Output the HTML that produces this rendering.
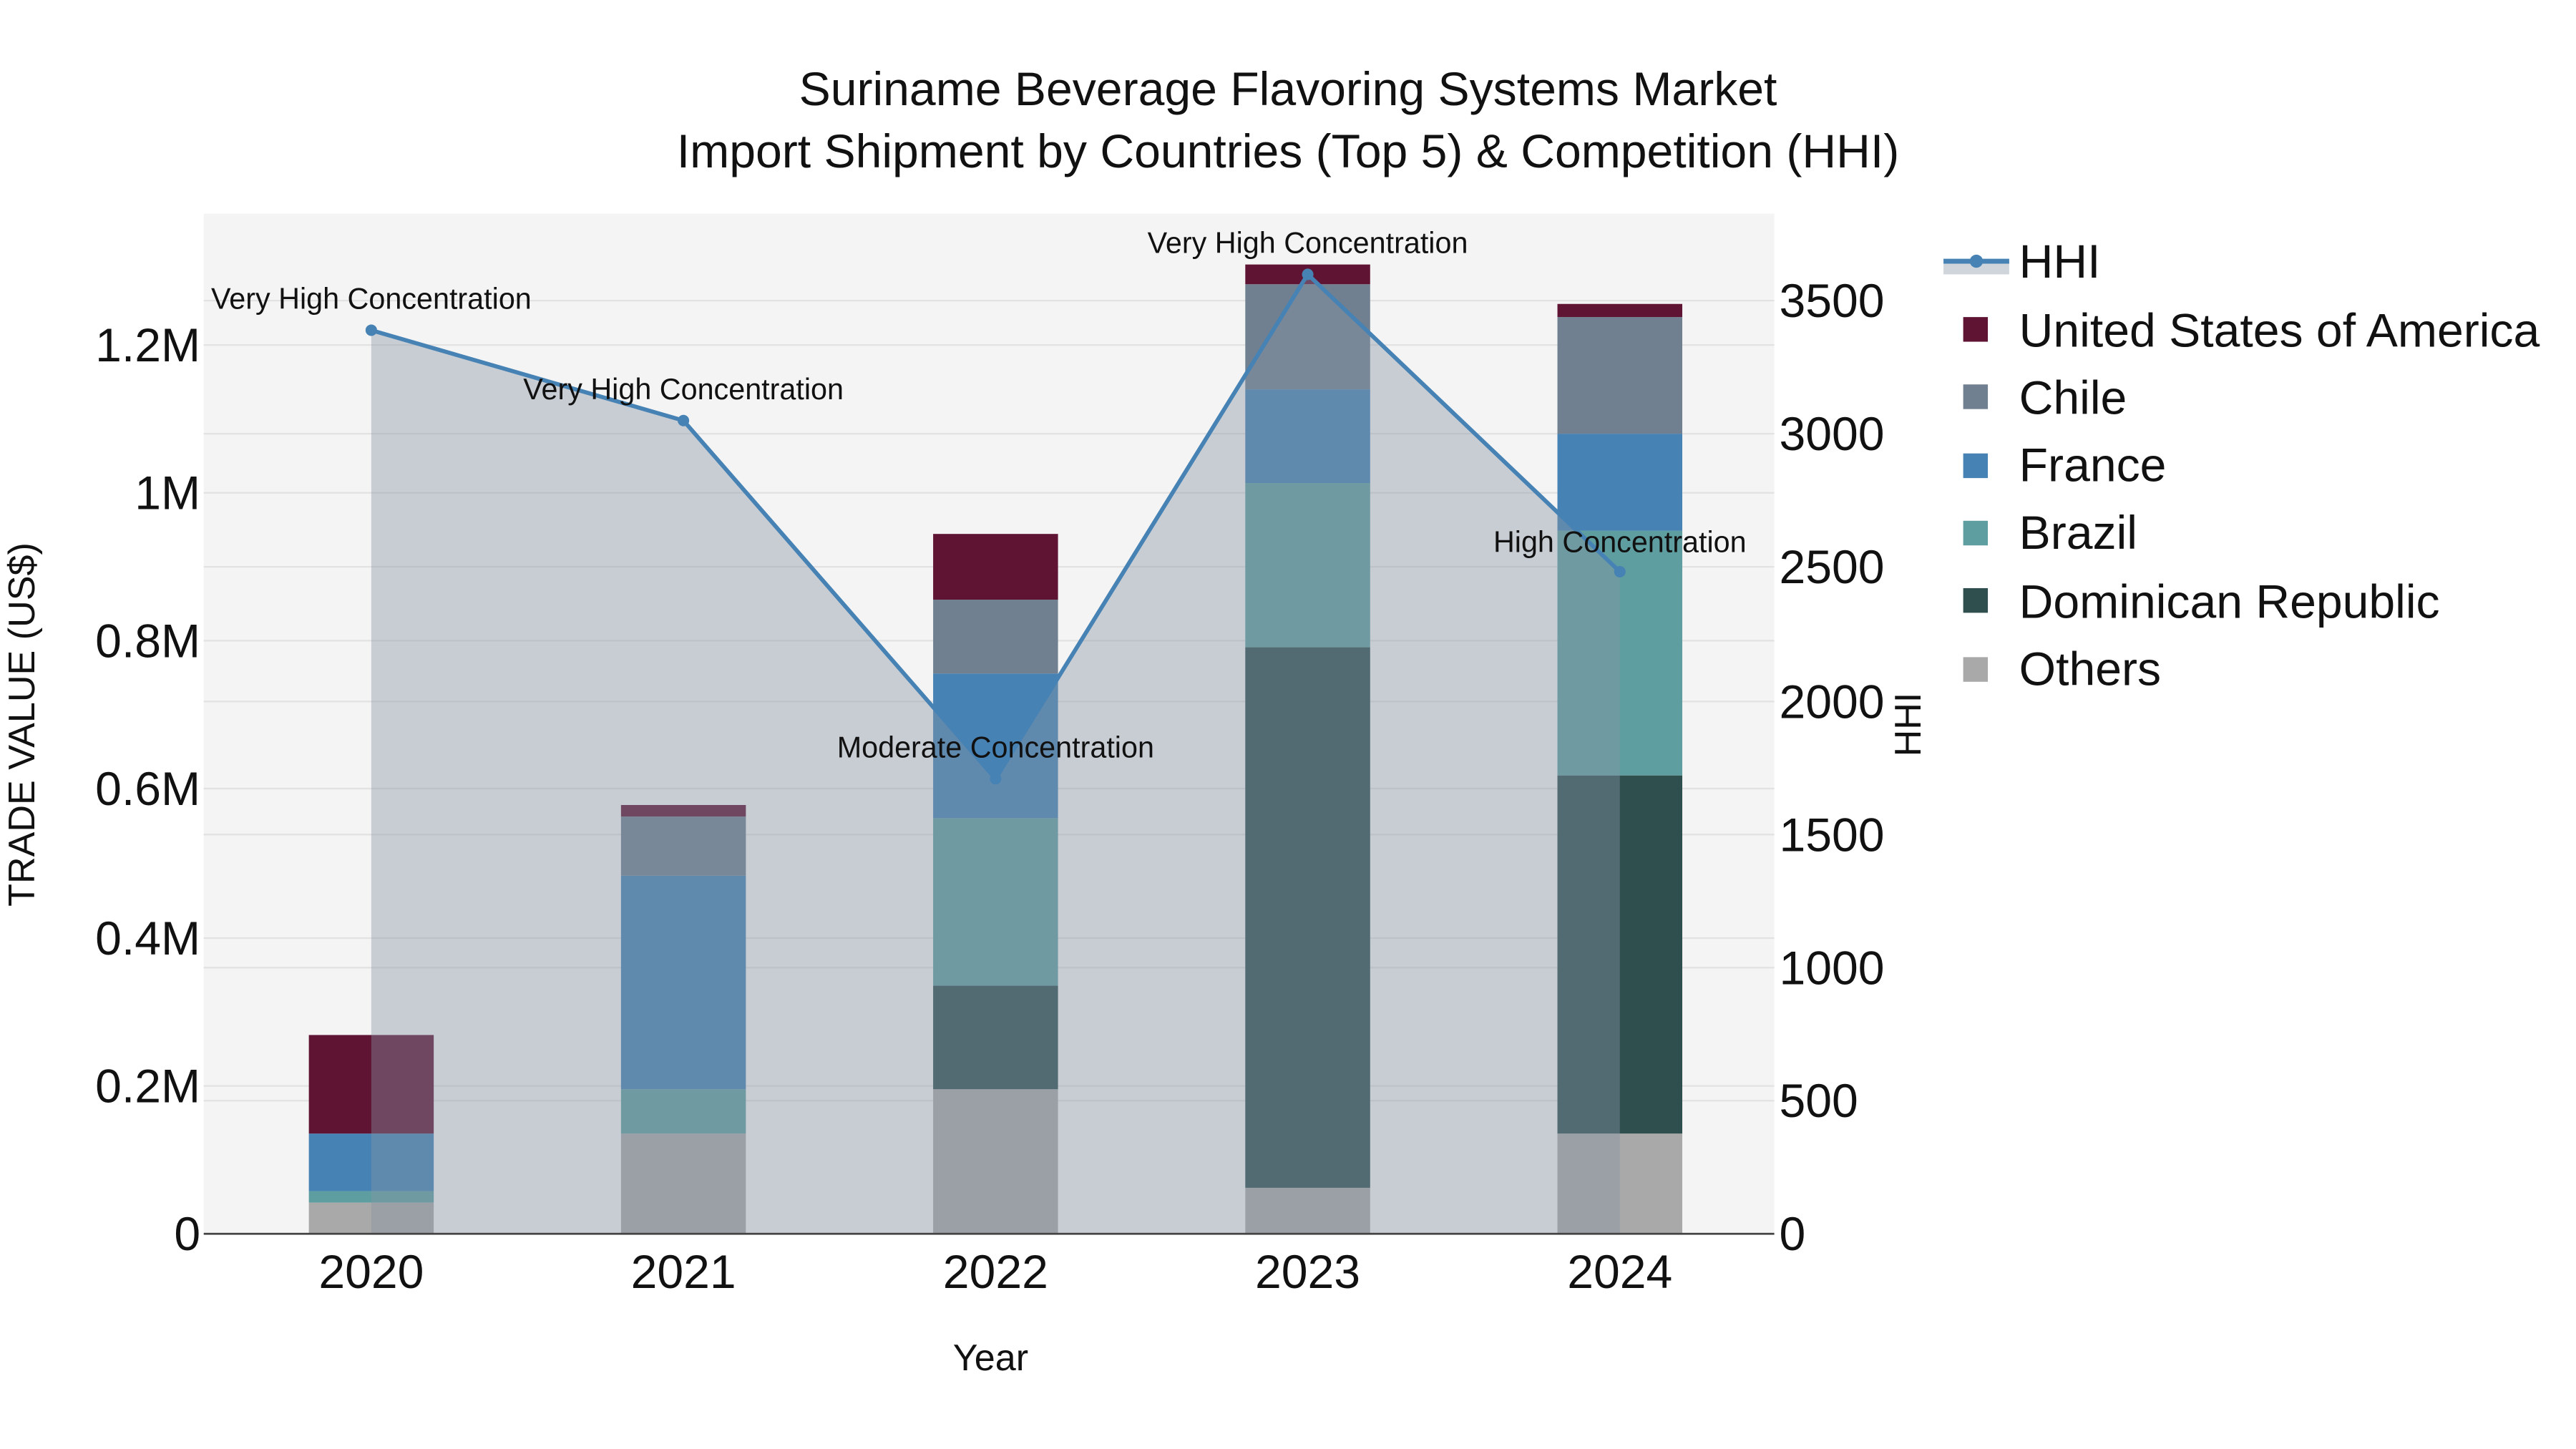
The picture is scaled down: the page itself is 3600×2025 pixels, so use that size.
<!DOCTYPE html>
<html><head><meta charset="utf-8"><style>html,body{margin:0;padding:0;background:#fff}svg{display:block}</style></head>
<body>
<svg width="3600" height="2025" viewBox="0 0 1568 882" xmlns="http://www.w3.org/2000/svg" font-family="Liberation Sans, Arial, sans-serif">
<rect x="0" y="0" width="1568" height="882" fill="#fff"/>
<rect x="124" y="130" width="956" height="621" fill="#f4f4f4"/>
<g stroke="#e2e2e2" stroke-width="1">
<line x1="124" x2="1080" y1="661" y2="661"/><line x1="124" x2="1080" y1="571" y2="571"/><line x1="124" x2="1080" y1="480" y2="480"/><line x1="124" x2="1080" y1="390" y2="390"/><line x1="124" x2="1080" y1="300" y2="300"/><line x1="124" x2="1080" y1="210" y2="210"/>
<line x1="124" x2="1080" y1="670" y2="670"/><line x1="124" x2="1080" y1="589" y2="589"/><line x1="124" x2="1080" y1="508" y2="508"/><line x1="124" x2="1080" y1="427" y2="427"/><line x1="124" x2="1080" y1="345" y2="345"/><line x1="124" x2="1080" y1="264" y2="264"/><line x1="124" x2="1080" y1="183" y2="183"/>
</g>
<g>
<rect x="188" y="732" width="76" height="19" fill="#a9a9a9"/>
<rect x="188" y="725" width="76" height="7" fill="#5f9ea0"/>
<rect x="188" y="690" width="76" height="35" fill="#4682b4"/>
<rect x="188" y="630" width="76" height="60" fill="#5f1433"/>

<rect x="378" y="690" width="76" height="61" fill="#a9a9a9"/>
<rect x="378" y="663" width="76" height="27" fill="#5f9ea0"/>
<rect x="378" y="533" width="76" height="130" fill="#4682b4"/>
<rect x="378" y="497" width="76" height="36" fill="#708090"/>
<rect x="378" y="490" width="76" height="7" fill="#5f1433"/>

<rect x="568" y="663" width="76" height="88" fill="#a9a9a9"/>
<rect x="568" y="600" width="76" height="63" fill="#2f4f4f"/>
<rect x="568" y="498" width="76" height="102" fill="#5f9ea0"/>
<rect x="568" y="410" width="76" height="88" fill="#4682b4"/>
<rect x="568" y="365" width="76" height="45" fill="#708090"/>
<rect x="568" y="325" width="76" height="40" fill="#5f1433"/>

<rect x="758" y="723" width="76" height="28" fill="#a9a9a9"/>
<rect x="758" y="394" width="76" height="329" fill="#2f4f4f"/>
<rect x="758" y="294" width="76" height="100" fill="#5f9ea0"/>
<rect x="758" y="237" width="76" height="57" fill="#4682b4"/>
<rect x="758" y="173" width="76" height="64" fill="#708090"/>
<rect x="758" y="161" width="76" height="12" fill="#5f1433"/>

<rect x="948" y="690" width="76" height="61" fill="#a9a9a9"/>
<rect x="948" y="472" width="76" height="218" fill="#2f4f4f"/>
<rect x="948" y="323" width="76" height="149" fill="#5f9ea0"/>
<rect x="948" y="264" width="76" height="59" fill="#4682b4"/>
<rect x="948" y="193" width="76" height="71" fill="#708090"/>
<rect x="948" y="185" width="76" height="8" fill="#5f1433"/>
</g>
<polygon points="226,751 226,201 416,256 606,474 796,167 986,348 986,751" fill="rgb(134,147,164)" fill-opacity="0.4"/>
<polyline points="226,201 416,256 606,474 796,167 986,348" fill="none" stroke="#4682b4" stroke-width="2.5"/>
<g fill="#4682b4"><circle cx="226" cy="201" r="3.5"/><circle cx="416" cy="256" r="3.5"/><circle cx="606" cy="474" r="3.5"/><circle cx="796" cy="167" r="3.5"/><circle cx="986" cy="348" r="3.5"/></g>
<line x1="124" x2="1080" y1="751" y2="751" stroke="#444" stroke-width="1.2"/>
<g font-size="18" fill="#111" text-anchor="middle">
<text x="226" y="188">Very High Concentration</text>
<text x="416" y="243">Very High Concentration</text>
<text x="606" y="461">Moderate Concentration</text>
<text x="796" y="154">Very High Concentration</text>
<text x="986" y="336">High Concentration</text>
</g>
<g font-size="28.8" fill="#111" text-anchor="middle">
<text x="784" y="64">Suriname Beverage Flavoring Systems Market</text>
<text x="784" y="102">Import Shipment by Countries (Top 5) &amp; Competition (HHI)</text>
<text x="226" y="784">2020</text><text x="416" y="784">2021</text><text x="606" y="784">2022</text><text x="796" y="784">2023</text><text x="986" y="784">2024</text>
</g>
<g font-size="28.8" fill="#111" text-anchor="end">
<text x="122" y="761">0</text><text x="122" y="671">0.2M</text><text x="122" y="581">0.4M</text><text x="122" y="490">0.6M</text><text x="122" y="400">0.8M</text><text x="122" y="310">1M</text><text x="122" y="220">1.2M</text>
</g>
<g font-size="28.8" fill="#111">
<text x="1083" y="761">0</text><text x="1083" y="680">500</text><text x="1083" y="599">1000</text><text x="1083" y="518">1500</text><text x="1083" y="437">2000</text><text x="1083" y="355">2500</text><text x="1083" y="274">3000</text><text x="1083" y="193">3500</text>
</g>
<text x="603" y="834" font-size="22.7" fill="#111" text-anchor="middle">Year</text>
<text transform="translate(21,441) rotate(-90)" font-size="22.7" fill="#111" text-anchor="middle">TRADE VALUE (US$)</text>
<text transform="translate(1169,441) rotate(-90)" font-size="22.7" fill="#111" text-anchor="middle">HHI</text>
<rect x="1183" y="159" width="40" height="8" fill="#d0d5dc"/>
<line x1="1183" x2="1223" y1="159" y2="159" stroke="#4682b4" stroke-width="3"/>
<circle cx="1203" cy="159" r="4" fill="#4682b4"/>
<rect x="1195" y="193" width="15" height="15" fill="#5f1433"/>
<rect x="1195" y="234" width="15" height="15" fill="#708090"/>
<rect x="1195" y="276" width="15" height="15" fill="#4682b4"/>
<rect x="1195" y="317" width="15" height="15" fill="#5f9ea0"/>
<rect x="1195" y="358" width="15" height="15" fill="#2f4f4f"/>
<rect x="1195" y="400" width="15" height="15" fill="#a9a9a9"/>
<g font-size="28.8" fill="#111">
<text x="1229" y="169">HHI</text>
<text x="1229" y="211">United States of America</text>
<text x="1229" y="252">Chile</text>
<text x="1229" y="293">France</text>
<text x="1229" y="334">Brazil</text>
<text x="1229" y="376">Dominican Republic</text>
<text x="1229" y="417">Others</text>
</g>
</svg>
</body></html>
